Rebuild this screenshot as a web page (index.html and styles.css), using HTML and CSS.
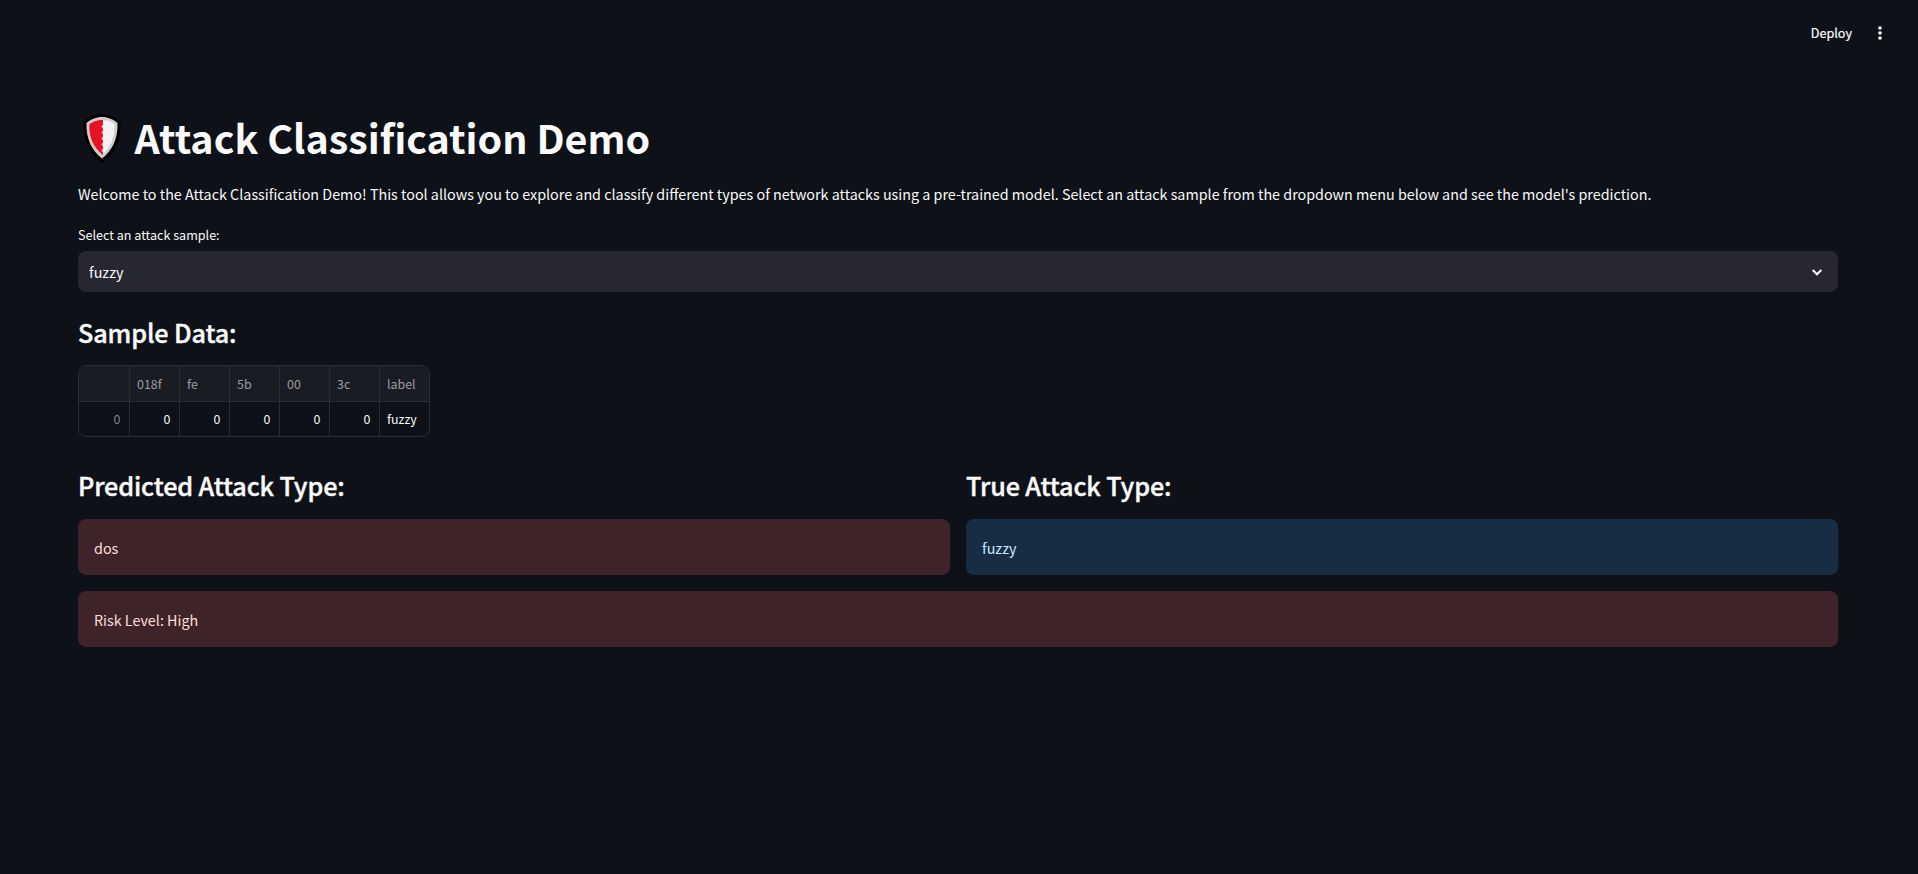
FILE: index.html
```html
<!DOCTYPE html>
<html lang="en">
<head>
<meta charset="utf-8">
<title>Attack Classification Demo</title>
<link rel="stylesheet" href="styles.css">
</head>
<body>
<header class="toolbar">
  <span class="deploy">Deploy</span>
  <svg class="dots" viewBox="0 0 20 20"><circle cx="10" cy="5" r="1.8"/><circle cx="10" cy="10" r="1.8"/><circle cx="10" cy="15" r="1.8"/></svg>
</header>
<main class="page">
  <h1 class="title">
    <svg class="shield" viewBox="0 0 38 49"><path d="M19 0C12 0 5.500 3 .5 7.500C0 25 5 39 19 49C33 39 38 25 37.500 7.500C32.500 3 26 0 19 0z" fill="#000"/><path d="M19 3C13 3 7.500 5.500 3.500 9C3 24 8 36 19 44.500C30 36 35 24 34.500 9C30.500 5.500 25 3 19 3z" fill="#ccc"/><path d="M20 6C26 6.200 29 8 31.700 10.500C32 23 28 33 20 40.500z" fill="#f2f2f2"/><path d="M20 6C14 6 9 8 6.300 10.500C6 23 10 33 20 41V38.500l-1.700-2 1.700-2v-2l-1.700-2 1.700-2v-2l-1.700-2 1.700-2v-2l-1.700-2 1.700-2v-2l-1.700-2L20 10.500z" fill="#e81224"/></svg>
    <span class="title-text">Attack Classification Demo</span>
  </h1>
  <p class="intro">Welcome to the Attack Classification Demo! This tool allows you to explore and classify different types of network attacks using a pre-trained model. Select an attack sample from the dropdown menu below and see the model's prediction.</p>
  <div class="label">Select an attack sample:</div>
  <div class="select"><span>fuzzy</span><svg class="chevron" viewBox="0 0 18 18"><path d="M4.700 7L9 11.200L13.300 7"/></svg></div>
  <h2 class="heading sample">Sample Data:</h2>
  <table class="grid">
    <tr class="head"><th></th><th>018f</th><th>fe</th><th>5b</th><th>00</th><th>3c</th><th>label</th></tr>
    <tr><td class="index">0</td><td>0</td><td>0</td><td>0</td><td>0</td><td>0</td><td class="text">fuzzy</td></tr>
  </table>
  <div class="columns">
    <section><h2 class="heading">Predicted Attack Type:</h2><div class="alert error">dos</div></section>
    <section><h2 class="heading">True Attack Type:</h2><div class="alert info">fuzzy</div></section>
  </div>
  <div class="alert error risk">Risk Level: High</div>
</main>
</body>
</html>
```
FILE: styles.css
```css
* { box-sizing: border-box; }
body { margin: 0; background: #0e1117; color: #fafafa; font-family: "Noto Sans CJK SC", "Noto Sans", sans-serif; font-size: 14.34px; }
h1, h2, p { margin: 0; }
.toolbar { height: 66px; display: flex; justify-content: flex-end; align-items: center; padding-right: 28px; gap: 18px; font-size: 12.6px; }
.deploy { padding-bottom: 2px; -webkit-text-stroke: 0.2px #fafafa; }
.dots { width: 20px; height: 20px; fill: #fafafa; }
.page { padding: 40px 80px 0 78px; }
.title { display: flex; align-items: center; height: 60px; font-size: 39.4px; font-weight: 700; gap: 13.5px; padding-left: 5px; }
.shield { width: 38px; height: 49px; margin-top: 5px; }
.intro { height: 24px; line-height: 24px; margin-top: 16px; white-space: nowrap; }
.label { height: 20px; line-height: 20px; margin-top: 19px; font-size: 12.55px; }
.select { height: 41px; margin-top: 6px; background: #262730; border-radius: 8px; display: flex; align-items: center; justify-content: space-between; padding: 0 12px 0 11px; }
.select span { padding-bottom: 1px; }
.chevron { width: 18px; height: 18px; margin-top: 1px; fill: none; stroke: #fafafa; stroke-width: 2.1; }
.heading { font-size: 25.2px; font-weight: 500; line-height: 34px; letter-spacing: -0.12px; -webkit-text-stroke: 0.4px #fafafa; }
.sample { margin-top: 23px; }
.grid { width: 352px; margin-top: 16px; table-layout: fixed; border-collapse: separate; border-spacing: 0; border: 1px solid #2b2d34; border-radius: 8px; overflow: hidden; font-size: 12.4px; line-height: 18px; }
.grid th, .grid td { width: 50px; height: 34px; padding: 0 8.500px 1px 7px; border-right: 1px solid #2b2d34; text-align: right; }
.grid th { height: 36px; padding-right: 0; padding-bottom: 0; padding-top: 1px; background: #1a1c24; color: #9c9da1; text-align: left; font-weight: 400; border-bottom: 1px solid #2b2d34; }
.grid th:first-child { width: 51px; }
.grid th:last-child { width: 49px; }
.grid th:last-child, .grid td:last-child { border-right: 0; }
.grid .index { color: #84868b; }
.grid .text { text-align: left; padding-right: 0; }
.columns { display: grid; grid-template-columns: 1fr 1fr; gap: 16px; margin-top: 31px; }
.alert { height: 56px; border-radius: 8px; display: flex; align-items: center; padding: 0 16px; margin-top: 16px; }
.columns .alert { margin-top: 17px; }
.error { background: #3e2428; color: #ffdede; }
.info { background: #172d43; color: #c7ebff; }
```
